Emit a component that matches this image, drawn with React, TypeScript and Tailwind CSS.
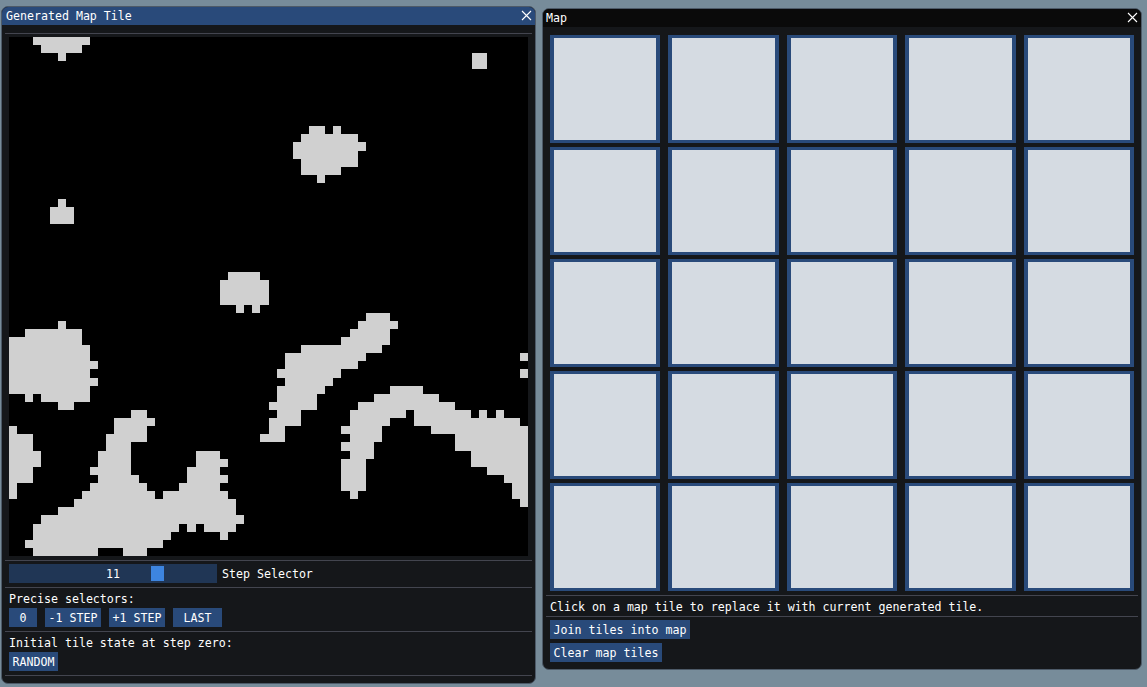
const RUNS: [number, number, number][] = [
  [0, 3, 9], [1, 4, 8], [2, 6, 6], [2, 57.05, 58], [3, 57.05, 58],
  [11, 37, 38], [11, 40, 40], [12, 36, 42], [13, 35, 43], [14, 35, 42], [15, 36, 42], [16, 36, 40], [17, 38, 38],
  [20, 6, 6], [21, 5, 7], [22, 5, 7],
  [29, 27, 30], [30, 26, 31], [31, 26, 31], [32, 26, 31], [33, 28, 28], [33, 30, 30],
  [34, 44, 46], [35, 6, 6], [35, 43, 47], [36, 2, 8], [36, 42, 46], [37, 0, 8], [37, 41, 46],
  [38, 0, 9], [38, 36, 45], [39, 0, 9], [39, 34, 43], [39, 63, 63], [40, 0, 10], [40, 34, 42],
  [41, 0, 9], [41, 33, 40], [41, 63, 63], [42, 0, 10], [42, 34, 39], [43, 0, 9], [43, 33, 38], [43, 47, 50],
  [44, 2, 2], [44, 4, 9], [44, 33, 37], [44, 45, 52], [45, 6, 7], [45, 32, 37], [45, 43, 54],
  [46, 15, 16], [46, 33, 35], [46, 42, 48], [46, 50, 56], [46, 58, 58], [46, 60, 60],
  [47, 13, 17], [47, 32, 35], [47, 42, 46], [47, 50, 62],
  [48, 0, 0], [48, 13, 16], [48, 32, 33], [48, 41, 45], [48, 52, 63],
  [49, 0, 2], [49, 12, 16], [49, 31, 33], [49, 42, 45], [49, 55, 63],
  [50, 0, 2], [50, 12, 14], [50, 41, 44], [50, 55, 63],
  [51, 0, 3], [51, 11, 14], [51, 23, 25], [51, 42, 44], [51, 57, 63],
  [52, 0, 3], [52, 11, 14], [52, 23, 26], [52, 41, 43], [52, 57, 63],
  [53, 0, 2], [53, 10, 14], [53, 22, 25], [53, 41, 43], [53, 59, 63],
  [54, 0, 2], [54, 11, 15], [54, 22, 26], [54, 41, 43], [54, 61, 63],
  [55, 0, 0], [55, 10, 16], [55, 21, 25], [55, 41, 43], [55, 62, 63],
  [56, 0, 0], [56, 9, 17], [56, 19, 26], [56, 42, 42], [56, 62, 63],
  [57, 8, 27], [57, 63, 63], [58, 6, 27], [59, 4, 28],
  [60, 3, 20], [60, 22, 22], [60, 24, 27], [61, 3, 19], [61, 26, 26], [62, 2, 18], [63, 3, 10], [63, 14, 16],
];

function Close() {
  return (
    <svg width="11" height="11" viewBox="0 0 11 11" className="shrink-0">
      <path d="M1 1 L10 10 M10 1 L1 10" stroke="#fff" strokeWidth="1.1" fill="none" />
    </svg>
  );
}

function Sep() {
  return <div className="mx-[3px] h-px shrink-0 bg-[#43454f]" />;
}

function Btn({ label, w }: { label: string; w: string }) {
  return (
    <div className={`flex h-[19px] items-center justify-center bg-[#294a7a] pt-[2px] ${w}`}>{label}</div>
  );
}

export default function App() {
  return (
    <div className="flex h-[687px] w-[1147px] items-start gap-[6px] overflow-hidden bg-[#778c9a] pl-px pt-[6px] font-['DejaVu_Sans_Mono',monospace] text-[11.62px] leading-[13px] text-white">
      <div className="flex h-[678px] w-[535px] flex-col overflow-hidden rounded-[7px] border border-[#4d5a68] bg-[#15171a]">
        <div className="flex h-[18px] shrink-0 items-center justify-between bg-[#294a7a] pb-px pl-[4px] pr-[3px]">
          <span className="pt-[2px]">Generated Map Tile</span>
          <Close />
        </div>
        <div className="mt-[8px]"><Sep /></div>
        <div className="ml-[7px] mt-[3px] h-[519px] w-[519px] shrink-0 bg-black">
          <svg width="519" height="519" viewBox="0 0 64 64" shapeRendering="crispEdges" className="block">
            {RUNS.map(([r, a, b], i) => (
              <rect key={i} x={a} y={r} width={b - a + 1} height={1} fill="#d0d0d0" />
            ))}
          </svg>
        </div>
        <div className="mt-[4px]"><Sep /></div>
        <div className="ml-[7px] mt-[3px] flex items-center gap-[5px]">
          <div className="relative flex h-[19px] w-[208px] items-center justify-center bg-[#203655] pt-[2px]">
            <span>11</span>
            <div className="absolute left-[142px] top-[2px] h-[15px] w-[13px] bg-[#3d85e0]" />
          </div>
          <span className="pt-[2px]">Step Selector</span>
        </div>
        <div className="mt-[4px]"><Sep /></div>
        <div className="ml-[7px] mt-[5px] h-[13px]">Precise selectors:</div>
        <div className="ml-[7px] mt-[2px] flex gap-[8px]">
          <Btn label="0" w="w-[28px]" />
          <Btn label="-1 STEP" w="w-[56px]" />
          <Btn label="+1 STEP" w="w-[56px]" />
          <Btn label="LAST" w="w-[49px]" />
        </div>
        <div className="mt-[4px]"><Sep /></div>
        <div className="ml-[7px] mt-[5px] h-[13px]">Initial tile state at step zero:</div>
        <div className="ml-[7px] mt-[2px] flex">
          <Btn label="RANDOM" w="w-[49px]" />
        </div>
        <div className="mt-[4px]"><Sep /></div>
      </div>

      <div className="mt-[2px] flex h-[662px] w-[600px] flex-col overflow-hidden rounded-[7px] border border-[#4d5a68] bg-[#15171a]">
        <div className="flex h-[18px] shrink-0 items-center justify-between bg-[#0a0a0a] pb-px pl-[3px] pr-[3px]">
          <span className="pt-[2px]">Map</span>
          <Close />
        </div>
        <div className="mx-[7px] mt-[8px] grid shrink-0 grid-cols-5 gap-x-[8px] gap-y-[4px]">
          {Array.from({ length: 25 }).map((_, i) => (
            <div key={i} className="h-[108px] border-x-4 border-y-[3px] border-[#294a7a] bg-[#d5dbe2]" />
          ))}
        </div>
        <div className="mt-[4px]"><Sep /></div>
        <div className="ml-[7px] mt-[5px] h-[13px] whitespace-nowrap">Click on a map tile to replace it with current generated tile.</div>
        <div className="mt-[2px]"><Sep /></div>
        <div className="ml-[7px] mt-[3px] flex">
          <Btn label="Join tiles into map" w="w-[140px]" />
        </div>
        <div className="ml-[7px] mt-[4px] flex">
          <Btn label="Clear map tiles" w="w-[112px]" />
        </div>
      </div>
    </div>
  );
}
